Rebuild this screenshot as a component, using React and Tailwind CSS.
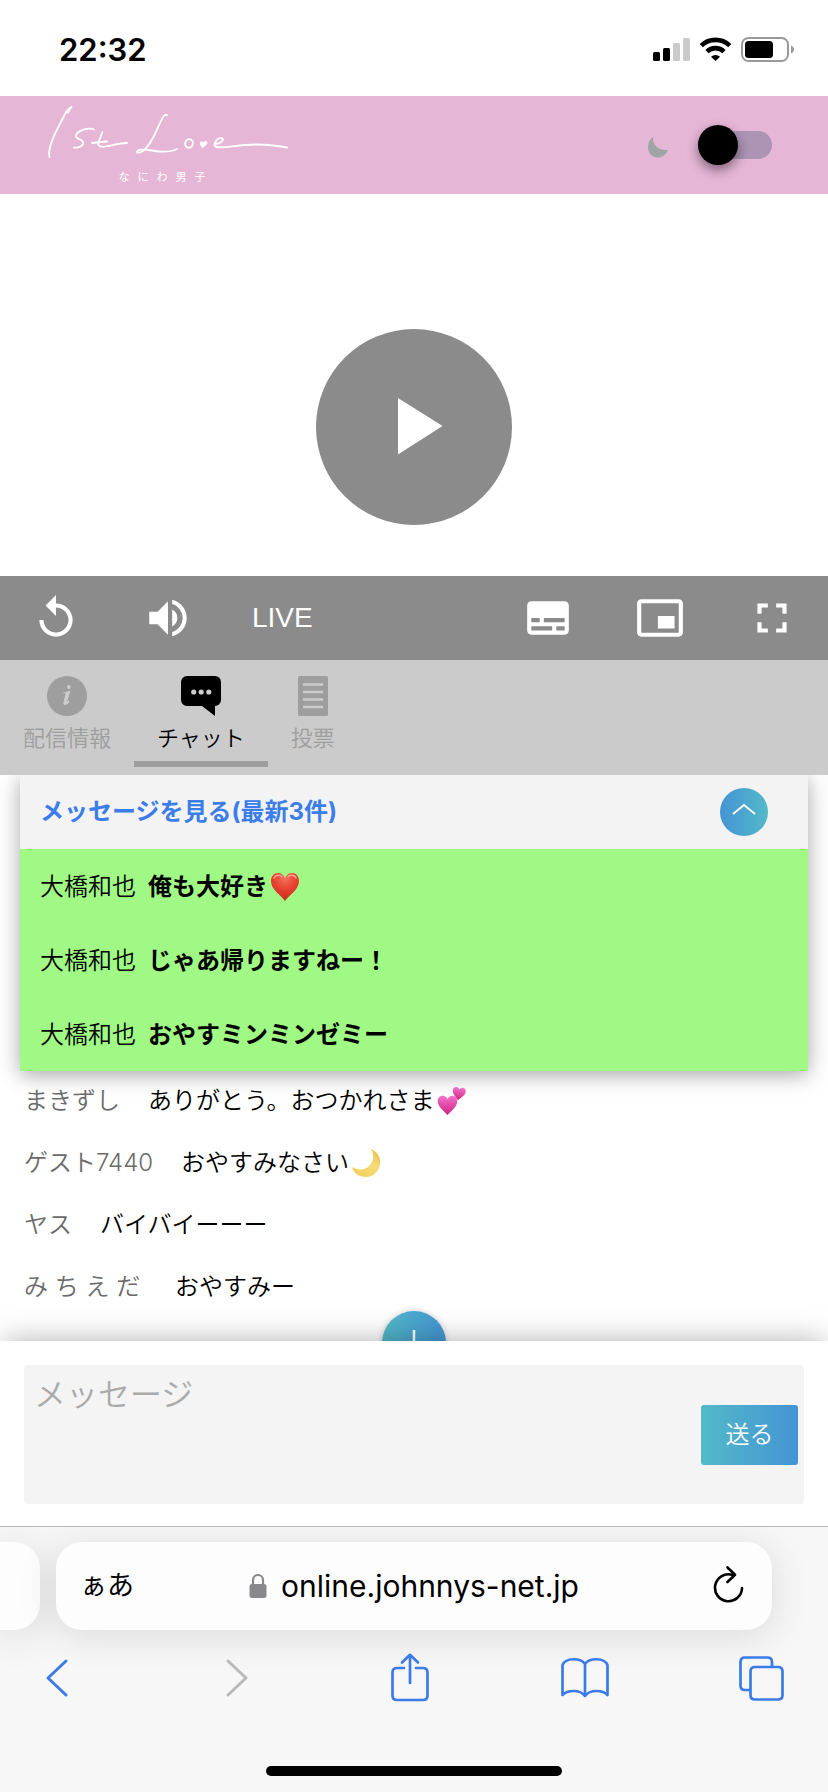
import React, { useState } from 'react';
import {
  MdReplay, MdVolumeUp, MdSubtitles, MdPictureInPictureAlt, MdFullscreen
} from 'react-icons/md';

const PINNED = [
  { id: 1, name: '大橋和也', text: '俺も大好き', emoji: 'heart' },
  { id: 2, name: '大橋和也', text: 'じゃあ帰りますねー！' },
  { id: 3, name: '大橋和也', text: 'おやすミンミンゼミー' },
];

const MESSAGES = [
  { id: 1, name: 'まきずし', text: 'ありがとう。おつかれさま', emoji: 'hearts' },
  { id: 2, name: 'ゲスト7440', text: 'おやすみなさい', emoji: 'moon' },
  { id: 3, name: 'ヤス', text: 'バイバイーーー' },
  { id: 4, name: 'み ち え だ ', text: 'おやすみー' },
];

const HEART = 'M15 29C12 24 1 18 1 9C1 4 4 1 8 1C11 1 14 3 15 6C16 3 19 1 22 1C26 1 29 4 29 9C29 18 18 24 15 29Z';

function Emoji({ name }) {
  if (name === 'heart') {
    return (
      <svg role="img" aria-label="❤️" viewBox="0 0 30 30" className="ml-0.5 size-[30px] shrink-0">
        <defs>
          <radialGradient id="red" cx="0.5" cy="0.2" r="0.8">
            <stop offset="0" stopColor="#f4705c" />
            <stop offset="0.5" stopColor="#e8402f" />
            <stop offset="1" stopColor="#c42a20" />
          </radialGradient>
        </defs>
        <path d={HEART} fill="url(#red)" />
        <path d="M4 6C5 3 10 2 12 5M18 5C20 2 25 3 26 6" stroke="#f9a698" strokeWidth="1.5" fill="none" strokeLinecap="round" />
      </svg>
    );
  }
  if (name === 'hearts') {
    return (
      <svg role="img" aria-label="💕" viewBox="0 0 30 30" className="ml-0.5 size-[30px] shrink-0">
        <defs>
          <linearGradient id="pink" x1="0" y1="0" x2="0" y2="1">
            <stop offset="0" stopColor="#f173cb" />
            <stop offset="1" stopColor="#d0217f" />
          </linearGradient>
        </defs>
        <path d={HEART} fill="url(#pink)" transform="translate(0 9) scale(0.7)" />
        <path d={HEART} fill="url(#pink)" transform="translate(16 0) rotate(8) scale(0.46)" />
      </svg>
    );
  }
  return (
    <svg role="img" aria-label="🌙" viewBox="0 0 30 30" className="ml-0.5 size-[30px] shrink-0">
      <defs>
        <linearGradient id="gold" x1="0" y1="1" x2="1" y2="0">
          <stop offset="0" stopColor="#f0cf52" />
          <stop offset="0.6" stopColor="#f5dc78" />
          <stop offset="1" stopColor="#e5b93f" />
        </linearGradient>
      </defs>
      <path d="M20 1C27 4 30 10 29 16C28 24 22 29 15 29C8 29 2 25 1 19C7 23 15 22 19 17C23 12 23 6 20 1Z" fill="url(#gold)" />
    </svg>
  );
}

/* Status bar */
function StatusBar() {
  return (
    <div className="flex h-24 items-center justify-between pt-1 pr-8 pl-[59px]">
      <span className="text-[31px] font-semibold text-black">22:32</span>
      <svg viewBox="0 0 144 26" className="h-[26px] w-36" aria-hidden="true">
        <rect x="1" y="15" width="7" height="9" rx="1.5" />
        <rect x="11" y="11" width="7" height="13" rx="1.5" />
        <rect x="21" y="6" width="7" height="18" rx="1.5" fill="#cacaca" />
        <rect x="31" y="1" width="7" height="23" rx="1.5" fill="#cacaca" />
        <g fill="none" stroke="#000" strokeWidth="4.6">
          <path d="M49.3 8.6A20.4 20.4 0 0 1 77.7 8.6" />
          <path d="M55 14.6A12.2 12.2 0 0 1 72 14.6" />
        </g>
        <path d="M63.5 24L59 19.7A6.5 6.5 0 0 1 68 19.7Z" />
        <rect x="90" y="1" width="46" height="23" rx="6.5" fill="none" stroke="#999" strokeWidth="2" />
        <rect x="93" y="4" width="28" height="17" rx="3.5" />
        <path d="M139 8.5C143 10 143 15 139 16.5Z" fill="#999" />
      </svg>
    </div>
  );
}

function Logo() {
  return (
    <a href="#" aria-label="1st Love なにわ男子" className="flex w-[250px] flex-col items-center gap-2.5 text-white">
      <svg viewBox="44 103 250 58" className="h-[58px] w-full" fill="none" stroke="currentColor" strokeLinecap="round" strokeLinejoin="round" strokeWidth="1.8">
        <path d="M71.500 107C67 109 66 112 64 116C58 128 47 146 49.500 157" />
        <path d="M71.500 107L65 112L68 113Z" fill="currentColor" strokeWidth="1" />
        <path d="M94 129.500C88 127 76 131 76 136C76 140 85 139 83 144C81 147 77 148 74 147.500" />
        <path d="M102.500 132L98.500 142C97 147 102 147.500 108 146C114 145 120 143 127 143M92 143L107 141.500" />
        <path d="M167 115C163 113 160 124 154 136C149 146 142 154 137 152.500C136 149 145 149 152 150.500C160 152 170 152.500 177 149" />
        <ellipse cx="189" cy="143.500" rx="3.800" ry="4.300" transform="rotate(25 189 143.500)" />
        <path d="M202.500 147.500C200 144.500 200 142.500 201 142C202.500 141.500 203 142.500 203 143.500C204 141.500 206 141 207 142C207.500 143.500 205 146 202.500 147.500Z" fill="currentColor" strokeWidth="1" />
        <path d="M215 144C220 143.500 224 141 222.500 138.500C220 136.500 214 141 214.500 145C215.500 150 230 146 245 145C262 143.500 276 145.500 287 147.500" />
      </svg>
      <span className="flex gap-2 pr-3.5 text-[11px] leading-3">
        {[...'なにわ男子'].map(c => <span key={c}>{c}</span>)}
      </span>
    </a>
  );
}

function Header() {
  const [light, setLight] = useState(false);
  return (
    <header className="flex h-[98px] items-center justify-between bg-[#e6b6d7] pr-14 pl-11">
      <div className="pb-1"><Logo /></div>
      <label className="flex items-center gap-[30px]">
        <svg viewBox="0 0 20 22" className="mt-1 h-[22px] w-5" aria-hidden="true">
          <path d="M5 1C4 8 10 15 20 14C18 19 14 21.500 10 21.500C4 21.500 0 17 0 11C0 7 2 3 5 1Z" fill="#9ea5a4" />
        </svg>
        <input type="checkbox" role="switch" aria-label="ダークモード" className="sr-only" checked={light} onChange={e => setLight(e.target.checked)} />
        <span className={`flex h-7 w-[74px] items-center rounded-full bg-[#ac94b4] ${light ? 'justify-end' : 'justify-start'}`}>
          <span className="size-10 rounded-full bg-black shadow-[0_5px_12px_rgba(0,0,0,0.45)]" />
        </span>
      </label>
    </header>
  );
}

function ControlButton({ label, icon: Icon }) {
  return (
    <button aria-label={label} className="flex h-[84px] w-28 items-center justify-center">
      <Icon size={50} />
    </button>
  );
}

/* Video player */
function Player() {
  return (
    <section>
      <div className="flex justify-center pt-[135px] pb-[51px]">
        <button aria-label="再生" className="size-[196px] rounded-full bg-[#8b8b8b]">
          <svg viewBox="0 0 196 196" className="size-full">
            <path d="M82 69L126.500 97L82 125.500Z" fill="#fff" />
          </svg>
        </button>
      </div>
      <div className="flex justify-between bg-[#8b8b8b] text-white">
        <div className="flex items-center">
          <ControlButton label="リプレイ" icon={MdReplay} />
          <ControlButton label="音量" icon={MdVolumeUp} />
          <span className="pl-7 font-['Liberation_Sans',sans-serif] text-[28px] leading-none">LIVE</span>
        </div>
        <div className="flex">
          <ControlButton label="字幕" icon={MdSubtitles} />
          <ControlButton label="ピクチャーインピクチャー" icon={MdPictureInPictureAlt} />
          <ControlButton label="全画面" icon={MdFullscreen} />
        </div>
      </div>
    </section>
  );
}

function InfoIcon() {
  return (
    <svg viewBox="0 0 40 40" className="size-10">
      <circle cx="20" cy="20" r="20" fill="#9e9e9e" />
      <circle cx="21.800" cy="11" r="2" fill="#ccc" />
      <path d="M16.500 17C18.500 16.800 20 16.400 22.500 15.500L19.500 26C19.200 27.500 20.500 26.800 22 25" fill="none" stroke="#ccc" strokeWidth="1.200" />
      <path d="M18.800 16.500L22.800 15.300L19.600 26.500C19.400 27.500 20.500 27 22 25.200L22.500 25.800C21 28 19.500 29 18 29C16.500 29 16 28 16.500 26.200Z" fill="#ccc" />
    </svg>
  );
}

function ChatIcon() {
  return (
    <svg viewBox="0 0 40 40" className="size-10">
      <path d="M6 0H34A6 6 0 0 1 40 6V24A6 6 0 0 1 34 30V40L21 30H6A6 6 0 0 1 0 24V6A6 6 0 0 1 6 0Z" />
      <g fill="#ccc">
        <circle cx="12.700" cy="16" r="2.600" />
        <circle cx="20.200" cy="16" r="2.600" />
        <circle cx="27.800" cy="16" r="2.600" />
      </g>
    </svg>
  );
}

function VoteIcon() {
  return (
    <svg viewBox="0 0 40 40" className="size-10">
      <rect x="5" width="30" height="40" rx="1.500" fill="#9e9e9e" />
      <path d="M10 8.500H30M10 16H30M10 23.500H30M10 31H30" stroke="#ccc" strokeWidth="2.600" />
    </svg>
  );
}

const TABS = [
  { id: 'info', label: '配信情報', icon: InfoIcon },
  { id: 'chat', label: 'チャット', icon: ChatIcon },
  { id: 'vote', label: '投票', icon: VoteIcon },
];

function Tabs() {
  const [active, setActive] = useState('chat');
  return (
    <nav className="flex bg-[#cbcbcb] pt-4 pb-2">
      {TABS.map(({ id, label, icon: Icon }) => (
        <button
          key={id}
          onClick={() => setActive(id)}
          className={`flex flex-col items-center border-b-[6px] px-[23px] text-[22px] font-[350] ${
            active === id ? 'border-[#9e9e9e] text-black' : 'border-transparent text-[#9e9e9e]'
          }`}
        >
          <Icon />
          <span className="h-[45px] leading-[45px]">{label}</span>
        </button>
      ))}
    </nav>
  );
}

/* Chat: pinned messages, then the stream */
function Chat() {
  return (
    <section className="relative overflow-hidden pb-[22px]">
      <div className="mx-5 shadow-[0_4px_20px_rgba(0,0,0,0.35)]">
        <div className="flex h-[74px] items-center justify-between bg-[#f3f3f3] pr-10 pl-5">
          <h2 className="text-2xl font-bold text-[#3b7dea]">メッセージを見る(最新3件)</h2>
          <button aria-label="閉じる" className="flex size-12 items-center justify-center rounded-full bg-linear-to-r from-[#4494d3] to-[#54b9c8]">
            <svg viewBox="0 0 48 48" className="size-12" fill="none" stroke="#fff" strokeWidth="1.800">
              <path d="M13 26L24 17L35 26" />
            </svg>
          </button>
        </div>
        <ul className="bg-[#a0f885] text-2xl text-black">
          {PINNED.map(m => (
            <li key={m.id} className="flex h-[74px] items-center px-5 pt-0.5">
              <span className="mr-3 font-[350]">{m.name}</span>
              <span className="font-bold">{m.text}</span>
              {m.emoji && <Emoji name={m.emoji} />}
            </li>
          ))}
        </ul>
      </div>
      <ul className="px-6 text-2xl font-[350] text-black">
        {MESSAGES.map(m => (
          <li key={m.id} className="flex h-[62px] items-center pb-0.5 whitespace-pre">
            <span className="mr-7 text-[#6b6b6b]">{m.name}</span>
            <span>{m.text}</span>
            {m.emoji && <Emoji name={m.emoji} />}
          </li>
        ))}
      </ul>
      <button aria-label="スタンプ" className="absolute -bottom-[34px] left-1/2 size-16 -translate-x-1/2 rounded-full bg-linear-to-r from-[#54b9c8] to-[#4494d3] shadow-[0_0_6px_rgba(0,0,0,0.2)]">
        <svg viewBox="0 0 64 64" className="size-16" stroke="#fff" strokeWidth="2.500">
          <path d="M32 19V45M19 32H45" />
        </svg>
      </button>
    </section>
  );
}

function Composer() {
  return (
    <form className="bg-white px-6 pt-6 pb-[22px] shadow-[0_-2px_30px_-4px_rgba(0,0,0,0.35)]" onSubmit={e => e.preventDefault()}>
      <div className="flex items-center rounded bg-[#f4f4f4] pr-1.5">
        <textarea
          aria-label="メッセージ"
          placeholder="メッセージ"
          className="h-[139px] flex-1 resize-none bg-transparent px-2.5 pt-1.5 text-[32px] font-[350] outline-none placeholder:text-[#aaa]"
        />
        <button className="h-[60px] w-[97px] rounded-[3px] bg-linear-to-r from-[#54b9c8] to-[#4494d3] text-2xl font-[350] text-white">送る</button>
      </div>
    </form>
  );
}

const TOOLS = [
  { label: '戻る', d: 'M33 7L15 24L33 41', short: true },
  { label: '進む', d: 'M19 7L37 24L19 41', short: true, disabled: true },
  { label: '共有', d: 'M19 14H12Q7.500 14 7.500 18.500V41.500Q7.500 46 12 46H38Q42.500 46 42.500 41.500V18.500Q42.500 14 38 14H31M25 29V1M17 8.500L25 .8L33 8.500' },
  { label: 'ブックマーク', d: 'M24 10C20 4 5 3 1.500 11V41C6 36 19 35 24 42C29 35 42 36 46.500 41V11C43 3 28 4 24 10ZM24 10V42' },
  { label: 'タブ', d: 'M13 36H8Q3.500 36 3.500 31.500V8Q3.500 3.500 8 3.500H30.500Q35 3.500 35 8V13M18 13H41Q45.500 13 45.500 17.500V41Q45.500 45.500 41 45.500H18Q13.500 45.500 13.500 41V17.500Q13.500 13 18 13Z' },
];

/* Browser chrome */
function BrowserBar() {
  return (
    <footer className="relative overflow-hidden border-t border-[#b8b8b8] bg-[#f7f7f7] pt-[15px] pb-4">
      <div className="flex gap-4 pr-14">
        <div className="h-[88px] w-10 rounded-r-[26px] bg-[#fdfdfd] shadow-[0_6px_40px_rgba(0,0,0,0.12)]" />
        <div className="flex h-[88px] flex-1 items-center justify-between rounded-[26px] bg-[#fdfdfd] pr-[26px] pl-6 text-black shadow-[0_6px_40px_rgba(0,0,0,0.12)]">
          <button aria-label="ページ設定" className="text-[27px]">ぁあ</button>
          <a href="#" className="mr-4 flex items-center gap-3.5 text-[30px]">
            <svg viewBox="0 0 18 26" className="h-[26px] w-[18px]" aria-hidden="true">
              <rect x="0.500" y="11" width="17" height="14" rx="2.500" fill="#89898c" />
              <path d="M4 12V7A5 5 0 0 1 14 7V12" fill="none" stroke="#89898c" strokeWidth="2.200" />
            </svg>
            online.johnnys-net.jp
          </a>
          <button aria-label="再読み込み">
            <svg viewBox="0 0 36 40" className="h-10 w-9" fill="none" stroke="currentColor" strokeWidth="2.600" strokeLinecap="round" strokeLinejoin="round">
              <path d="M22 8.700A13.500 13.500 0 1 0 32 22M17.500 1.500L25 8.800L17.500 16" />
            </svg>
          </button>
        </div>
      </div>
      <div className="flex justify-between pt-6 pr-[43px] pl-[33px]">
        {TOOLS.map(t => (
          <button key={t.label} aria-label={t.label} disabled={t.disabled} className="text-[#3b7be9] disabled:text-[#b9b9b9]">
            <svg viewBox="0 0 48 48" className="size-12 overflow-visible" fill="none" stroke="currentColor" strokeWidth={t.short ? 3 : 2.7} strokeLinecap="round" strokeLinejoin="round">
              <path d={t.d} />
            </svg>
          </button>
        ))}
      </div>
      <div className="mx-auto mt-16 h-2.5 w-[296px] rounded-full bg-black" />
    </footer>
  );
}

export default function App() {
  return (
    <div className="min-h-screen bg-white font-['Inter','Noto_Sans_CJK_JP',sans-serif]">
      <StatusBar />
      <Header />
      <Player />
      <Tabs />
      <Chat />
      <div className="relative">
        <Composer />
      </div>
      <BrowserBar />
    </div>
  );
}
